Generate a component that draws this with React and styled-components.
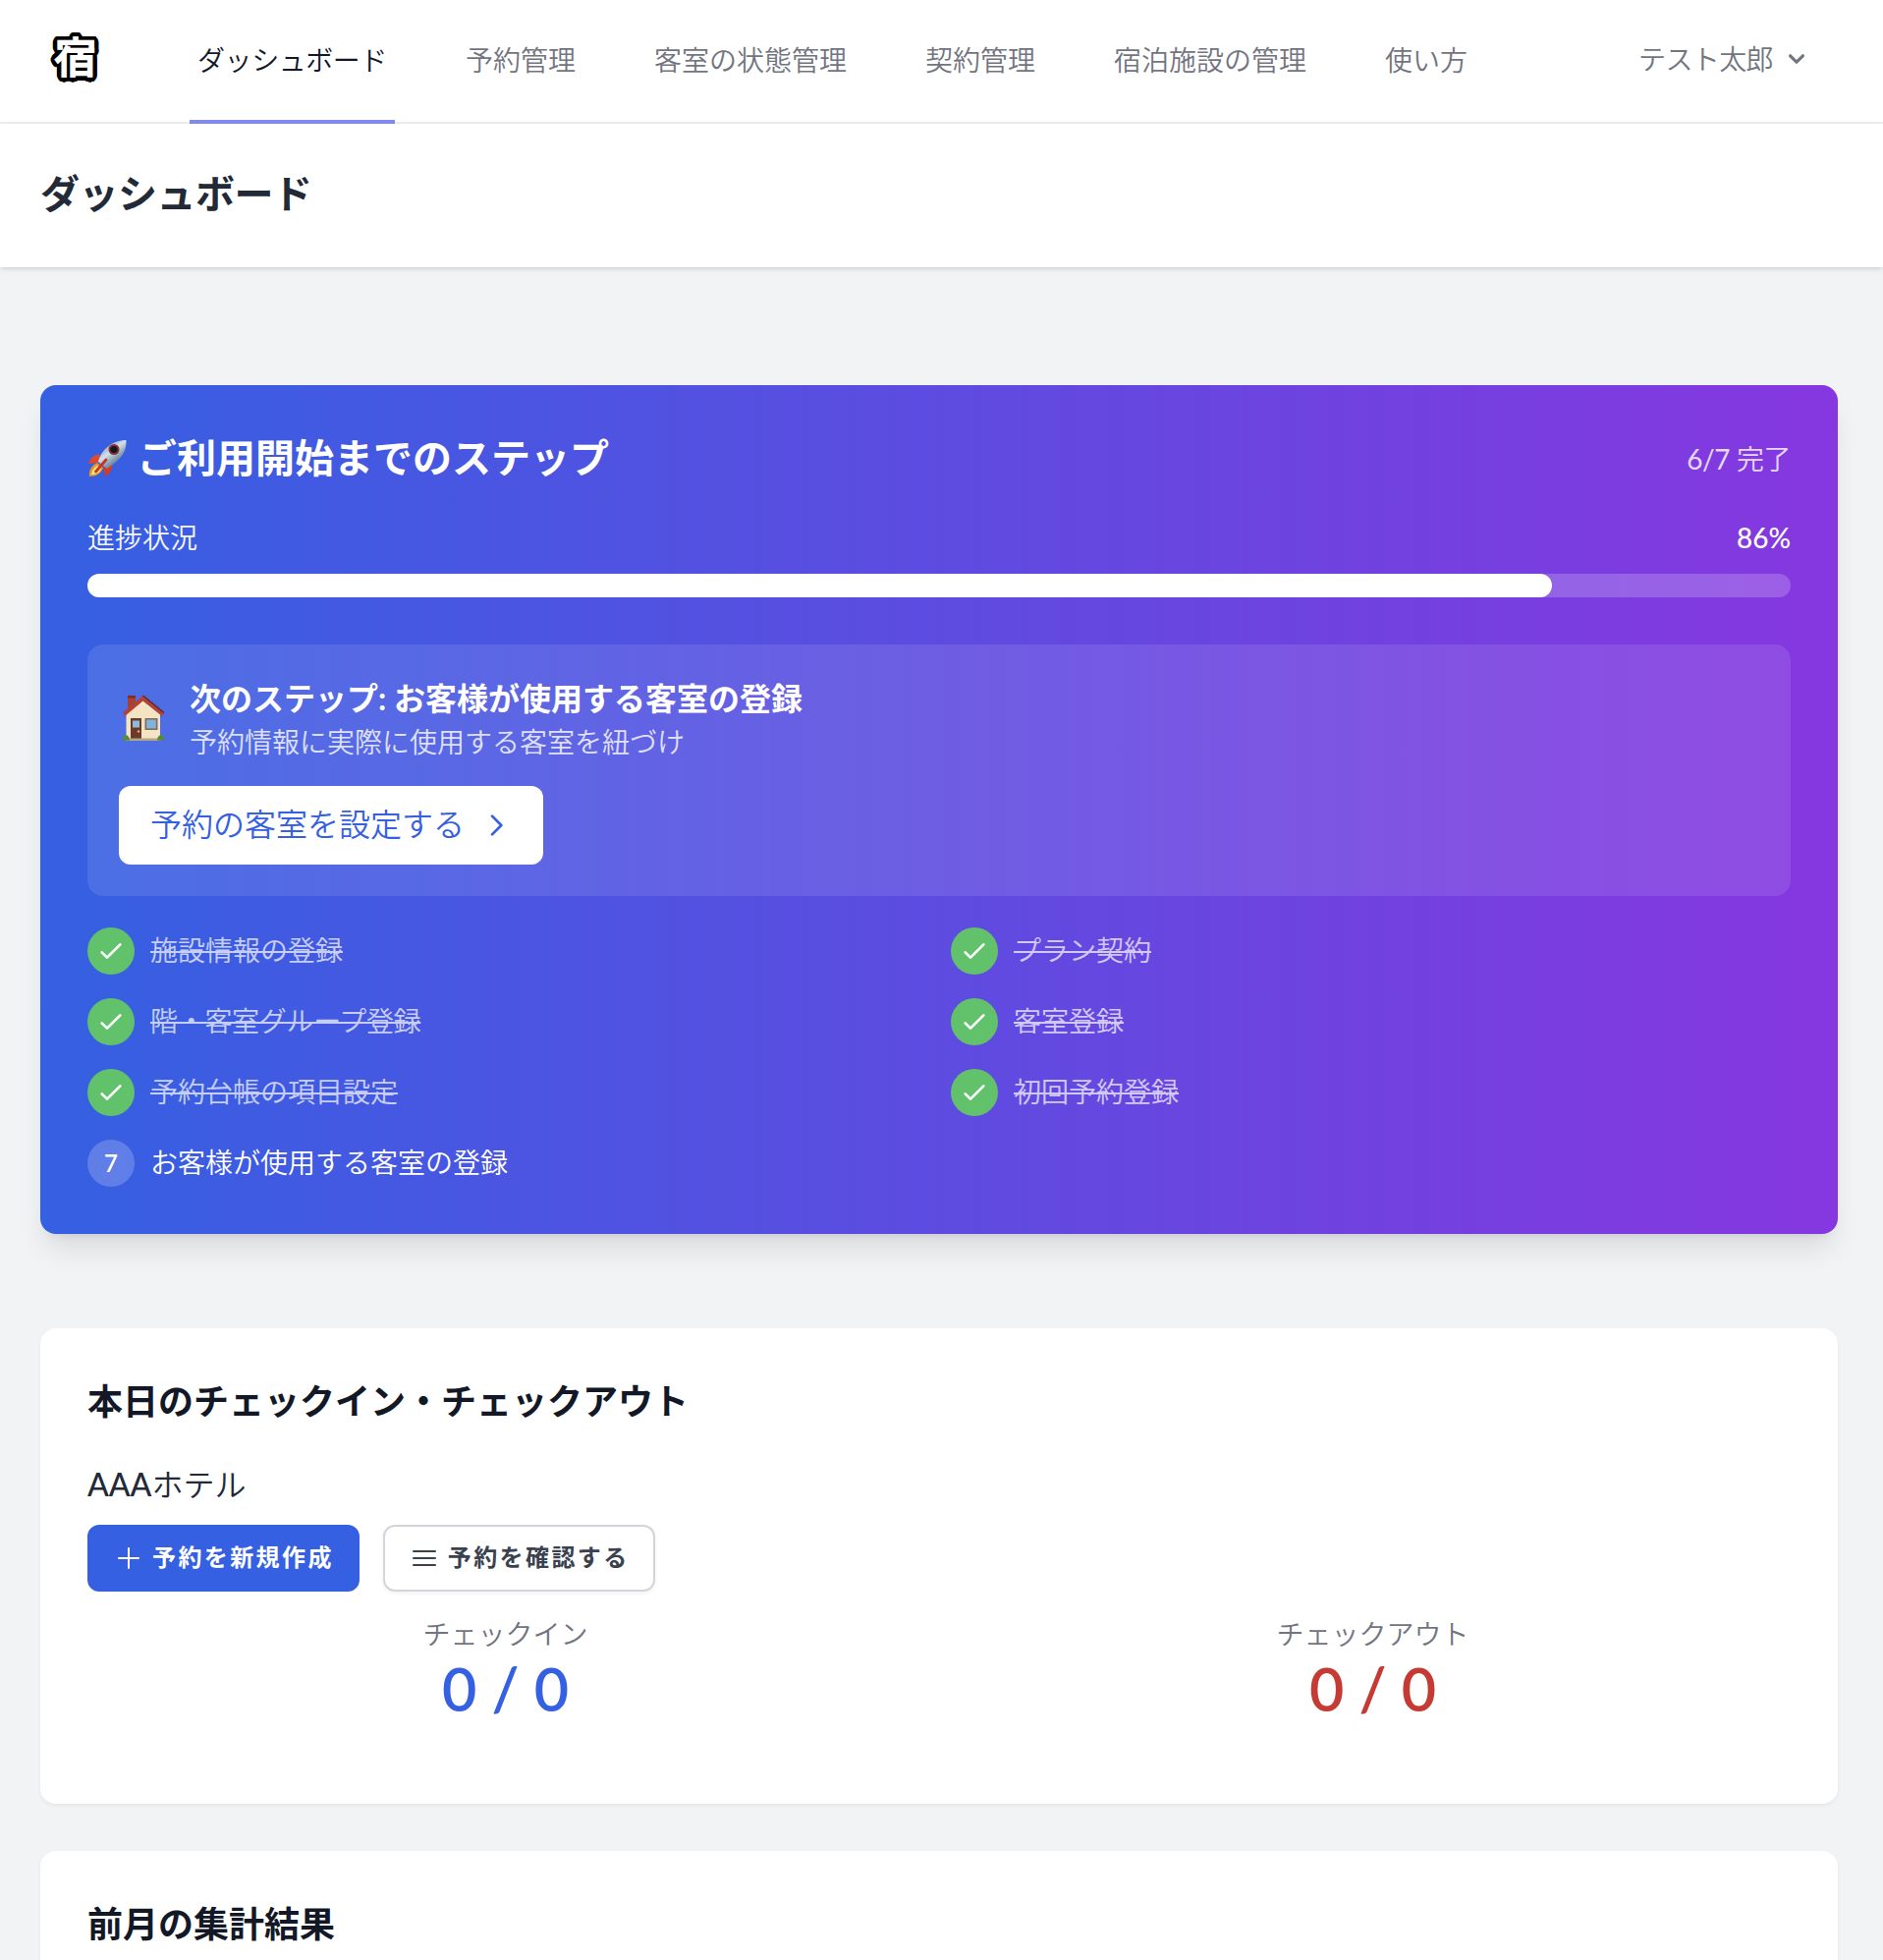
import React from 'react';
import styled, { createGlobalStyle, css } from 'styled-components';

const GlobalStyle = createGlobalStyle`
  *, *::before, *::after { box-sizing: border-box; }
  html, body { margin: 0; padding: 0; overflow: hidden; }
  body {
    background: #f2f3f5;
    color: #131827;
    font-family: Lato, "Noto Sans CJK JP", sans-serif;
    font-size: 32px;
    line-height: 48px;
    -webkit-font-smoothing: antialiased;
  }
  h1, h2, h3, p, ul { margin: 0; padding: 0; }
  button { font-family: inherit; }
`;

/* Japanese text in a fixed-height line, raised slightly to sit on its optical centre. */
const line = (size, height, lift = 2) => css`
  font-size: ${size}px;
  line-height: ${height - lift}px;
  padding-bottom: ${lift}px;
`;

const Page = styled.div`
  height: 1995px;
  overflow: hidden;
`;

const Nav = styled.nav`
  display: flex;
  height: 126px;
  padding: 0 72px 0 48px;
  background: #fff;
  border-bottom: 2px solid #efeff0;
`;

const outline = Array.from({ length: 32 }, (_, i) => {
  const a = (i * Math.PI) / 16;
  return `${(Math.cos(a) * 5.5).toFixed(2)}px ${(Math.sin(a) * 5.5).toFixed(2)}px 0 #000`;
}).join(', ');

const Brand = styled.a`
  flex: none;
  width: 58px;
  height: 64px;
  margin: 24px 87px 0 0;
  color: #fff;
  font-family: "Noto Sans CJK JP", sans-serif;
  font-size: 42px;
  line-height: 64px;
  font-weight: 400;
  text-align: center;
  -webkit-text-stroke: 2.4px #fff;
  text-shadow: ${outline};
`;

const NavLinks = styled.div`
  display: flex;
  gap: 64px;
  height: 126px;
`;

const NavLink = styled.a`
  display: flex;
  align-items: center;
  padding: 0 8px;
  border-bottom: 4px solid ${(p) => (p.$active ? '#838bec' : 'transparent')};
  color: ${(p) => (p.$active ? '#131827' : '#72757f')};
  font-size: 28px;
  font-weight: 350;
  line-height: 40px;
  white-space: nowrap;
  letter-spacing: ${(p) => (p.$active ? '-0.43px' : 'normal')};
`;

const UserMenu = styled.button`
  display: flex;
  align-items: center;
  gap: 8px;
  height: 119px;
  margin-left: auto;
  padding: 0;
  border: 0;
  background: none;
  color: #72757f;
  font-size: 28px;
  font-weight: 350;
  line-height: 40px;
  letter-spacing: -0.6px;
`;

const Header = styled.header`
  position: relative;
  padding: 48px 41px;
  background: #fff;
  box-shadow: 0 2px 6px rgba(0, 0, 0, 0.1), 0 2px 4px -2px rgba(0, 0, 0, 0.1);
`;

const PageTitle = styled.h1`
  ${line(40, 50, 3)}
  color: #222937;
  font-weight: 700;
  letter-spacing: -0.5px;
`;

const Main = styled.main`
  display: flex;
  flex-direction: column;
  gap: 48px;
  padding: 120px 46px 0 41px;
`;

const Onboarding = styled.section`
  margin-bottom: 48px;
  padding: 48px;
  border-radius: 16px;
  background: linear-gradient(to right, #3560e1, #8637e0);
  box-shadow: 0 20px 30px -6px rgba(0, 0, 0, 0.1), 0 8px 12px -8px rgba(0, 0, 0, 0.1);
  color: #fff;
`;

const Row = styled.div`
  display: flex;
  align-items: center;
  justify-content: space-between;
  margin-bottom: ${(p) => p.$gap}px;
`;

const OnboardingTitle = styled.h2`
  ${line(40, 56, 3)}
  display: flex;
  align-items: center;
  gap: 10px;
  font-weight: 700;
`;

const Small = styled.span`
  ${line(28, 40)}
  opacity: ${(p) => p.$opacity ?? 1};
  letter-spacing: ${(p) => p.$tracking ?? 0}px;
  font-weight: 350;
`;

const Latin = styled.span`
  font-weight: ${(p) => p.$weight ?? 400};
`;

const Track = styled.div`
  height: 24px;
  margin-bottom: 48px;
  border-radius: 12px;
  background: rgba(255, 255, 255, 0.2);
`;

const Fill = styled.div`
  height: 24px;
  border-radius: 12px;
  background: #fff;
`;

const NextStep = styled.div`
  padding: 32px;
  margin-bottom: 32px;
  border-radius: 16px;
  background: rgba(255, 255, 255, 0.1);
`;

const NextStepInfo = styled.div`
  display: flex;
  align-items: center;
  gap: 24px;
  margin-bottom: 24px;
`;

const NextStepTitle = styled.h3`
  ${line(32, 48)}
  font-weight: 700;
`;

const NextStepText = styled.p`
  ${line(28, 40)}
  font-weight: 350;
  opacity: 0.8;
`;

const StepButton = styled.button`
  display: flex;
  align-items: center;
  gap: 16px;
  height: 80px;
  padding: 0 32px;
  border: 0;
  border-radius: 12px;
  background: #fff;
  color: #3560e1;
`;

const StepButtonLabel = styled.span`
  ${line(32, 48)}
  font-weight: 350;
`;

const Steps = styled.ul`
  display: grid;
  grid-template-columns: 1fr 1fr;
  gap: 24px;
  list-style: none;
`;

const Step = styled.li`
  display: flex;
  align-items: center;
  gap: 16px;
`;

const StepMark = styled.span`
  display: flex;
  align-items: center;
  justify-content: center;
  width: 48px;
  height: 48px;
  border-radius: 50%;
  background: ${(p) => (p.$done ? '#61c26b' : 'rgba(255, 255, 255, 0.2)')};
  font-size: 24px;
  font-weight: 600;
`;

const StepName = styled.span`
  ${line(28, 40)}
  font-weight: 350;
  letter-spacing: ${(p) => p.$tracking ?? 0}px;
  ${(p) =>
    p.$done &&
    css`
      opacity: 0.7;
      text-decoration: line-through;
      text-decoration-thickness: 2px;
    `}
`;

const Card = styled.section`
  padding: 48px;
  border-radius: 16px;
  background: #fff;
  box-shadow: 0 2px 4px rgba(0, 0, 0, 0.05);
`;

const CardTitle = styled.h2`
  ${line(36, 56, 4)}
  margin-bottom: 32px;
  font-weight: 700;
`;

const Facility = styled.p`
  ${line(32, 48)}
  margin-bottom: 16px;
  color: #222937;
  font-weight: 350;
`;

const Actions = styled.div`
  display: flex;
  gap: 24px;
  margin-bottom: 24px;
`;

const Action = styled.button`
  display: flex;
  align-items: center;
  gap: 8px;
  height: 68px;
  padding: 0 24px;
  border: 2px solid ${(p) => (p.$primary ? '#3560e1' : '#d3d5da')};
  border-radius: 12px;
  background: ${(p) => (p.$primary ? '#3560e1' : '#fff')};
  color: ${(p) => (p.$primary ? '#fff' : '#3a414f')};
  box-shadow: ${(p) => (p.$primary ? 'none' : '0 2px 4px rgba(0, 0, 0, 0.05)')};
`;

const ActionLabel = styled.span`
  ${line(24, 32)}
  font-weight: 700;
  letter-spacing: 2.4px;
`;

const Stats = styled.div`
  display: grid;
  grid-template-columns: 1fr 1fr;
  gap: 32px;
  padding-bottom: 32px;
  text-align: center;
`;

const StatLabel = styled.p`
  ${line(28, 40)}
  color: #72757f;
  font-weight: 350;
`;

const StatValue = styled.p`
  ${line(61, 72, 2)}
  color: ${(p) => p.$color};
  font-weight: 600;
`;

const Icon = ({ d, width = 1.5, size = 32 }) => (
  <svg width={size} height={size} viewBox="0 0 24 24" fill="none" stroke="currentColor" strokeWidth={width} strokeLinecap="round" strokeLinejoin="round">
    <path d={d} />
  </svg>
);

const Rocket = () => (
  <svg width="41" height="40" viewBox="0 0 41 40">
    <defs>
      <linearGradient id="hull" x1="0.2" y1="0.1" x2="0.8" y2="0.9">
        <stop offset="0" stopColor="#7793ad" />
        <stop offset="0.4" stopColor="#d3e0ea" />
        <stop offset="0.65" stopColor="#8fa5b9" />
        <stop offset="1" stopColor="#465a70" />
      </linearGradient>
    </defs>
    <path d="M13 15.500C7 15 3 19 1 25l10-1z" fill="#e0492b" />
    <path d="M25 24c1 6-1 10-7 14l-2-10z" fill="#d23a29" />
    <path d="M2 38c-1-6 2-11 8-14l6 5c-2 6-7 9-14 9z" fill="#e9962a" />
    <path d="M4 36c1-5 3-7 6-9l4 3c-2 4-5 6-10 6z" fill="#ffec7a" />
    <path d="M39.500 1c.5 11-4 19-19.500 29l-9-7C14 10 26 1 39.500 1z" fill="url(#hull)" />
    <circle cx="27" cy="10.500" r="5.500" fill="#8a2f33" />
    <circle cx="27" cy="10.500" r="3.600" fill="#14181f" />
    <path d="M19 21 8.500 33" stroke="#c4342a" strokeWidth="2.800" strokeLinecap="round" />
  </svg>
);

const House = () => (
  <svg width="48" height="52" viewBox="0 0 48 52">
    <path d="M9 3h8v12H9z" fill="#a34336" />
    <path d="M9 2h8v2.500H9z" fill="#7d2d27" />
    <path d="M24.500 7 42 20.500V47H7.500V20.500z" fill="#f3e4c3" />
    <path d="M24.500 2 46 19.500 44 23 24.500 7.500 6 23l-2-3.500z" fill="#b14238" />
    <path d="M24.500 2 46 19.500" stroke="#5c2c2c" strokeWidth="1.500" />
    <path d="M12 25h11v21H12z" fill="#6a3b28" />
    <path d="M14 27.500h7v7h-7z" fill="#8dbbe0" />
    <circle cx="20" cy="38.500" r="1.200" fill="#e3b94e" />
    <path d="M26.500 25h13v12h-13z" fill="#8b6a52" />
    <path d="M28.200 26.600h9.600v8.800h-9.600z" fill="#7fb4e2" />
    <path d="M7 45.500h35V48H7z" fill="#b3a58a" />
    <path d="M4 47.500c-1-7 7-7 7 0zM39 47.500c0-7 8-7 7 0z" fill="#568a34" />
  </svg>
);

const LINKS = ['ダッシュボード', '予約管理', '客室の状態管理', '契約管理', '宿泊施設の管理', '使い方'];
const STEPS = [
  { name: '施設情報の登録' },
  { name: 'プラン契約' },
  { name: '階・客室グループ登録', tracking: -0.3 },
  { name: '客室登録' },
  { name: '予約台帳の項目設定' },
  { name: '初回予約登録' },
  { name: 'お客様が使用する客室の登録' },
];
const COMPLETED = 6;
const progress = Math.round((COMPLETED / STEPS.length) * 100);

export default function App() {
  return (
    <Page>
      <GlobalStyle />
      <Nav>
        <Brand>宿</Brand>
        <NavLinks>
          {LINKS.map((label, i) => (
            <NavLink key={label} $active={i === 0}>{label}</NavLink>
          ))}
        </NavLinks>
        <UserMenu>
          テスト太郎
          <svg width="32" height="32" viewBox="0 0 20 20" fill="currentColor">
            <path fillRule="evenodd" clipRule="evenodd" d="M5.293 7.293a1 1 0 011.414 0L10 10.586l3.293-3.293a1 1 0 111.414 1.414l-4 4a1 1 0 01-1.414 0l-4-4a1 1 0 010-1.414z" />
          </svg>
        </UserMenu>
      </Nav>
      <Header><PageTitle>ダッシュボード</PageTitle></Header>
      <Main>
        <Onboarding>
          <Row $gap={32}>
            <OnboardingTitle><Rocket />ご利用開始までのステップ</OnboardingTitle>
            <Small $opacity={0.8} $tracking={-0.5}><Latin>{COMPLETED}/{STEPS.length}</Latin> 完了</Small>
          </Row>
          <Row $gap={16}>
            <Small $opacity={0.95}>進捗状況</Small>
            <Small><Latin $weight={500}>{progress}%</Latin></Small>
          </Row>
          <Track><Fill style={{ width: `${progress}%` }} /></Track>
          <NextStep>
            <NextStepInfo>
              <House />
              <div>
                <NextStepTitle>次のステップ: お客様が使用する客室の登録</NextStepTitle>
                <NextStepText>予約情報に実際に使用する客室を紐づけ</NextStepText>
              </div>
            </NextStepInfo>
            <StepButton>
              <StepButtonLabel>予約の客室を設定する</StepButtonLabel>
              <Icon d="M9 5l7 7-7 7" width={2} />
            </StepButton>
          </NextStep>
          <Steps>
            {STEPS.map(({ name, tracking }, i) => (
              <Step key={name}>
                <StepMark $done={i < COMPLETED}>
                  {i < COMPLETED ? <Icon d="M5 13l4 4L19 7" width={2} /> : i + 1}
                </StepMark>
                <StepName $done={i < COMPLETED} $tracking={tracking}>{name}</StepName>
              </Step>
            ))}
          </Steps>
        </Onboarding>
        <Card>
          <CardTitle>本日のチェックイン・チェックアウト</CardTitle>
          <Facility><Latin $weight={500}>AAA</Latin>ホテル</Facility>
          <Actions>
            <Action $primary><Icon d="M12 4.500v15m7.500-7.500h-15" /><ActionLabel>予約を新規作成</ActionLabel></Action>
            <Action><Icon d="M3.750 6.750h16.500M3.750 12h16.500m-16.500 5.250h16.500" /><ActionLabel>予約を確認する</ActionLabel></Action>
          </Actions>
          <Stats>
            <div>
              <StatLabel>チェックイン</StatLabel>
              <StatValue $color="#3560e1">0 / 0</StatValue>
            </div>
            <div>
              <StatLabel>チェックアウト</StatLabel>
              <StatValue $color="#c63a34">0 / 0</StatValue>
            </div>
          </Stats>
        </Card>
        <Card>
          <CardTitle>前月の集計結果</CardTitle>
        </Card>
      </Main>
    </Page>
  );
}
